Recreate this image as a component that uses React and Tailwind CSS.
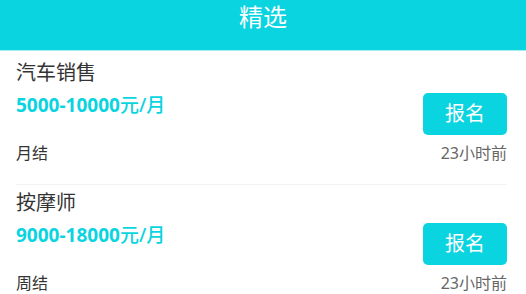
import React from 'react';

const jobs = [
  { id: 1, title: '汽车销售', salary: '5000-10000', unit: '元/月', settle: '月结', time: '23小时前' },
  { id: 2, title: '按摩师', salary: '9000-18000', unit: '元/月', settle: '周结', time: '23小时前' },
];

const font = { fontFamily: '"Noto Sans", "Noto Sans CJK SC", sans-serif' };

const App = () => {
  return (
    <div className="min-h-screen bg-white" style={font}>
      <div className="h-[51px] bg-[#0ad4e0] border-b border-[#a6eef3] flex justify-center">
        <h1 className="text-[24px] leading-[34px] text-white">精选</h1>
      </div>

      <div className="pt-1">
        {jobs.map((job) => (
          <div key={job.id} className="ml-4 mr-[19px] pt-1 pb-[19px] border-b border-[#f2f2f2]">
            <h3 className="text-[20px] leading-[28px] text-[#333]">{job.title}</h3>
            <div className="mt-[6px] flex justify-between items-start">
              <p className="text-[19px] leading-[24px] font-bold text-[#0ad4e0]">
                {job.salary}
                <span className="font-medium">{job.unit}</span>
              </p>
              <button className="w-[84px] h-[42px] rounded-[5px] bg-[#0ad4e0] text-white text-[20px]">
                报名
              </button>
            </div>
            <div className="mt-[6px] flex justify-between items-center text-[16px] leading-[24px]">
              <span className="text-[#333]">{job.settle}</span>
              <span className="text-[#666]">{job.time}</span>
            </div>
          </div>
        ))}
      </div>
    </div>
  );
};

export default App;
